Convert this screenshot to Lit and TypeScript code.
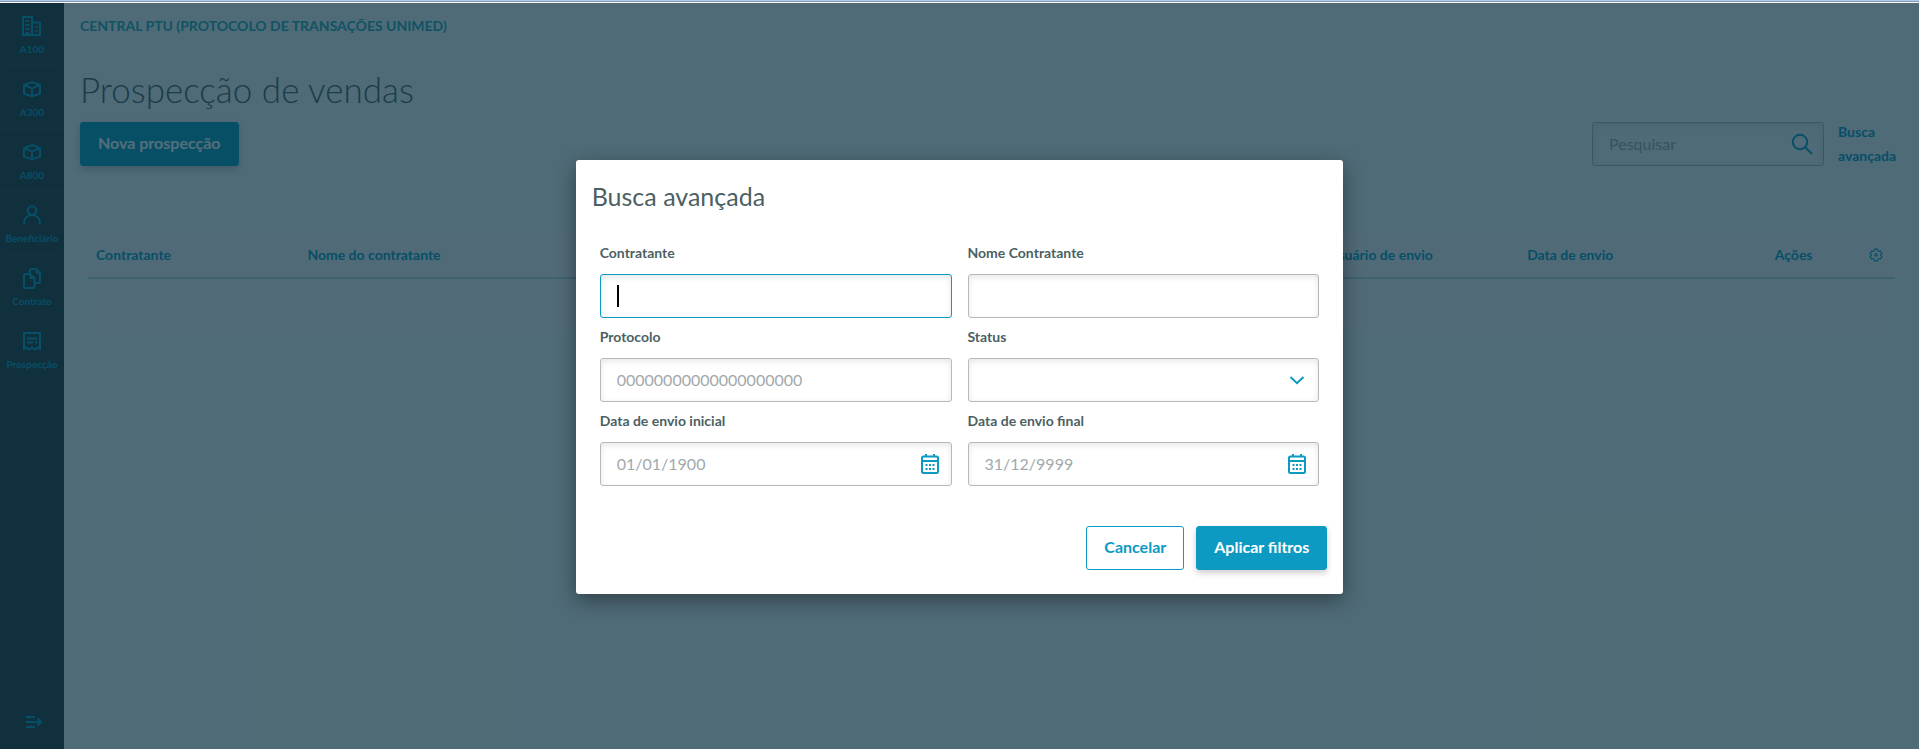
import { LitElement, html, css, svg, nothing } from "lit";
import { customElement, property } from "lit/decorators.js";

const icons: Record<string, unknown> = {
  building: svg`<path d="M3 21V3h9v18M12 8.500h8V21M2 21h19" /><path d="M5.500 7h4M5.500 11h4M5.500 15h4M5.500 19h4M15.500 13h2M15.500 17h2" />`,
  box: svg`<path d="M12 5l8 3v8.500L12 19.500 4 16.500V8zM4 8l8 3.500L20 8M12 11.500v8" />`,
  person: svg`<circle cx="12" cy="7.500" r="4.200" /><path d="M4 21c0-5.500 3-9 8-9s8 3.500 8 9" />`,
  copy: svg`<path d="M10 8V4.500A1.500 1.500 0 0 1 11.500 3h4.500l4 4v8.500A1.500 1.500 0 0 1 18.500 17H15" /><path d="M10 8H5.500A1.500 1.500 0 0 0 4 9.500v11A1.500 1.500 0 0 0 5.500 22h7.500a1.500 1.500 0 0 0 1.500-1.500V12.500z" /><path d="M10 8v4.500h4.500zM16 3v4h4z" fill="currentColor" stroke-width="1" />`,
  receipt: svg`<path d="M4 4h16v16l-2.500-1.500L14.800 20.500 12 18.500 9.200 20.500 6.500 18.500 4 20z" /><path d="M7 9.500h10M7 13.500h6M15 13.500h2" />`,
  expand: svg`<path d="M4 7h9M4 12h15M4 17h9M15.500 8.500L19 12l-3.500 3.500" />`,
  search: svg`<circle cx="10" cy="10" r="7.200" /><path d="M15.200 15.200L22 22" />`,
  gear: svg`<circle cx="12" cy="12" r="2" /><path d="M9.500 2h5l1 3 1.500 1 3-.5 2 4-2 2v1l2 2-2 4-3-.5-1.500 1-1 3h-5l-1-3-1.500-1-3 .5-2-4 2-2v-1l-2-2 2-4 3 .5 1.500-1z" />`,
  calendar: svg`<rect x="4" y="4.500" width="16" height="16.500" rx="1.500" /><path d="M4 9h16M8 2v3M16 2v3" /><path d="M7.500 13h2M11 13h2M14.500 13h2M7.500 17h2M11 17h2M14.500 17h2" />`,
  chevron: svg`<path d="M5.500 9l6.500 6.200L18.500 9" />`,
};

@customElement("ui-icon")
class UiIcon extends LitElement {
  static styles = css`
    :host { display: block; width: 24px; height: 24px; }
    svg { display: block; width: 100%; height: 100%; fill: none; stroke: currentColor; stroke-width: 2; }
  `;
  @property() name = "";
  render() {
    return html`<svg viewBox="0 0 24 24" aria-hidden="true">${icons[this.name]}</svg>`;
  }
}

const menu = [
  ["building", "A100"],
  ["box", "A300"],
  ["box", "A800"],
  ["person", "Beneficiário"],
  ["copy", "Contrato"],
  ["receipt", "Prospecção"],
];

@customElement("side-menu")
class SideMenu extends LitElement {
  static styles = css`
    :host { display: flex; flex-direction: column; justify-content: space-between; width: 64px; flex: none; background: #283a3c; color: #0d9ac2; }
    nav { display: flex; flex-direction: column; }
    .item { display: flex; flex-direction: column; align-items: center; gap: 3px; height: 63px; margin: 0 1px; padding-top: 11px; box-sizing: border-box; border-bottom: 1px solid #324547; font-size: 10px; line-height: 16px; font-weight: 700; color: inherit; text-decoration: none; white-space: nowrap; }
    .item:last-child { border-bottom-color: transparent; }
    .toggle { height: 58px; border: 0; border-top: 1px solid #324547; background: none; color: inherit; padding: 2px 0 0 4px; display: flex; align-items: center; justify-content: center; }
  `;
  render() {
    return html`
      <nav>
        ${menu.map(([icon, label]) => html`<a class="item" href="#${label}"><ui-icon name=${icon}></ui-icon>${label}</a>`)}
      </nav>
      <button class="toggle" aria-label="Expandir menu"><ui-icon name="expand"></ui-icon></button>
    `;
  }
}

const control = css`
  * { box-sizing: border-box; }
  button, input, select { font: inherit; }
  .control { position: relative; display: block; }
  .box { display: block; width: 100%; height: 44px; padding: 0 16px 2px; border: 1px solid #b4bbbc; border-radius: 3px; background: #fff; box-shadow: inset 0 2px 6px rgba(0, 0, 0, 0.1); color: #4c5f63; font-size: 16px; line-height: 24px; outline: none; appearance: none; }
  .box::placeholder { color: #a2a9ab; opacity: 1; }
  .btn { height: 44px; padding: 0 17px 2px; border: 1px solid #0d9ac2; border-radius: 3px; font-size: 16px; line-height: 24px; font-weight: 700; white-space: nowrap; }
  .primary { background: #0d9ac2; color: #fff; box-shadow: 0 3px 6px rgba(0, 0, 0, 0.2); }
  .outline { background: #fff; color: #0d9ac2; }
  .adorn { position: absolute; top: 0; bottom: 0; right: 10px; display: flex; align-items: center; padding: 0; border: 0; background: none; color: #0d9ac2; }
  .passive { pointer-events: none; }
`;

@customElement("search-dialog")
class SearchDialog extends LitElement {
  static styles = [control, css`
    :host { position: absolute; inset: 0; display: grid; place-items: center; padding-top: 2px; background: rgba(4, 44, 61, 0.685); }
    .dialog { width: 40%; min-width: 560px; padding: 16px 16px 24px; border-radius: 3px; background: #fff; box-shadow: 0 6px 20px rgba(0, 0, 0, 0.4); color: #4c5f63; }
    h2 { margin: 0 0 24px; font-size: 25px; line-height: 40px; font-weight: 400; }
    .fields { display: grid; grid-template-columns: 1fr 1fr; gap: 6px 16px; padding: 0 8px; }
    label { display: block; margin-bottom: 8px; font-size: 14px; line-height: 26px; font-weight: 700; }
    .active { border-color: #0d9ac2; caret-color: transparent; }
    .caret { position: absolute; left: 17px; top: 11px; width: 2px; height: 22px; background: #000; pointer-events: none; }
    .actions { display: flex; justify-content: flex-end; gap: 12px; margin-top: 40px; }
  `];
  field(id: string, label: string, placeholder = "", icon = "") {
    const first = id === "contratante";
    return html`<div>
      <label for=${id}>${label}</label>
      <div class="control">
        <input id=${id} class="box ${first ? "active" : ""}" type="text" placeholder=${placeholder} />
        ${first ? html`<span class="caret"></span>` : nothing}
        ${icon ? html`<button class="adorn" type="button" aria-label="Abrir calendário"><ui-icon name=${icon}></ui-icon></button>` : nothing}
      </div>
    </div>`;
  }
  render() {
    return html`
      <form class="dialog" role="dialog" aria-labelledby="title">
        <h2 id="title">Busca avançada</h2>
        <div class="fields">
          ${this.field("contratante", "Contratante")}
          ${this.field("nome", "Nome Contratante")}
          ${this.field("protocolo", "Protocolo", "00000000000000000000")}
          <div>
            <label for="status">Status</label>
            <div class="control">
              <select id="status" class="box"><option></option></select>
              <span class="adorn passive"><ui-icon name="chevron"></ui-icon></span>
            </div>
          </div>
          ${this.field("inicial", "Data de envio inicial", "01/01/1900", "calendar")}
          ${this.field("final", "Data de envio final", "31/12/9999", "calendar")}
        </div>
        <div class="actions">
          <button class="btn outline" type="button">Cancelar</button>
          <button class="btn primary" type="button">Aplicar filtros</button>
        </div>
      </form>
    `;
  }
}

@customElement("app-root")
class AppRoot extends LitElement {
  static styles = [control, css`
    :host { display: flex; flex-direction: column; min-height: 100vh; font-family: Lato, "Open Sans", sans-serif; }
    .strip { height: 3px; background: linear-gradient(#a9cdf5 1px, #8c98a3 1px 2px, #f7f9fa 2px); }
    .shell { position: relative; display: flex; flex: 1; background: #f2f4f4; }
    main { flex: 1; min-width: 0; padding: 11px 16px; }
    .crumb { font-size: 14px; line-height: 24px; font-weight: 700; color: #2fa8b8; }
    h1 { margin: 27px 0 7px; font-size: 35px; line-height: 48px; font-weight: 300; color: #4c5f63; }
    .toolbar { display: flex; justify-content: space-between; align-items: center; height: 48px; }
    .find { display: flex; align-items: center; gap: 14px; }
    .search { width: 232px; }
    .search .box { background: #f2f4f4; }
    .more { width: 65px; font-size: 14px; line-height: 24px; font-weight: 700; color: #0d9ac2; text-decoration: none; }
    table { width: calc(100% - 16px); margin: 64px 8px 0; border-collapse: collapse; table-layout: fixed; background: #f5f6f6; font-size: 14px; line-height: 24px; }
    th { height: 46px; padding: 0 8px; text-align: left; font-weight: 700; color: #0d9ac2; border-bottom: 2px solid #b9d9e0; }
    td { height: 56px; }
    .wide { width: 56.5%; }
    .c1 { width: 11.7%; }
    .c3 { width: 11%; }
    .c4 { width: 13.7%; }
    .c6 { width: 40px; }
    .cfg { display: block; margin-left: 6px; padding: 0; border: 0; background: none; color: inherit; }
    .cfg ui-icon { width: 14px; height: 14px; }
  `];
  render() {
    return html`
      <div class="strip"></div>
      <div class="shell">
        <side-menu></side-menu>
        <main>
          <div class="crumb">CENTRAL PTU (PROTOCOLO DE TRANSAÇÕES UNIMED)</div>
          <h1>Prospecção de vendas</h1>
          <div class="toolbar">
            <button class="btn primary">Nova prospecção</button>
            <div class="find">
              <div class="control search">
                <input class="box" type="text" placeholder="Pesquisar" aria-label="Pesquisar" />
                <button class="adorn" aria-label="Buscar"><ui-icon name="search"></ui-icon></button>
              </div>
              <a class="more" href="#busca">Busca avançada</a>
            </div>
          </div>
          <table>
            <thead>
              <tr>
                <th class="c1">Contratante</th>
                <th class="wide">Nome do contratante</th>
                <th class="c3">Usuário de envio</th>
                <th class="c4">Data de envio</th>
                <th>Ações</th>
                <th class="c6"><button class="cfg" aria-label="Configurar colunas"><ui-icon name="gear"></ui-icon></button></th>
              </tr>
            </thead>
            <tbody><tr><td colspan="6"></td></tr></tbody>
          </table>
        </main>
        <search-dialog></search-dialog>
      </div>
    `;
  }
}
